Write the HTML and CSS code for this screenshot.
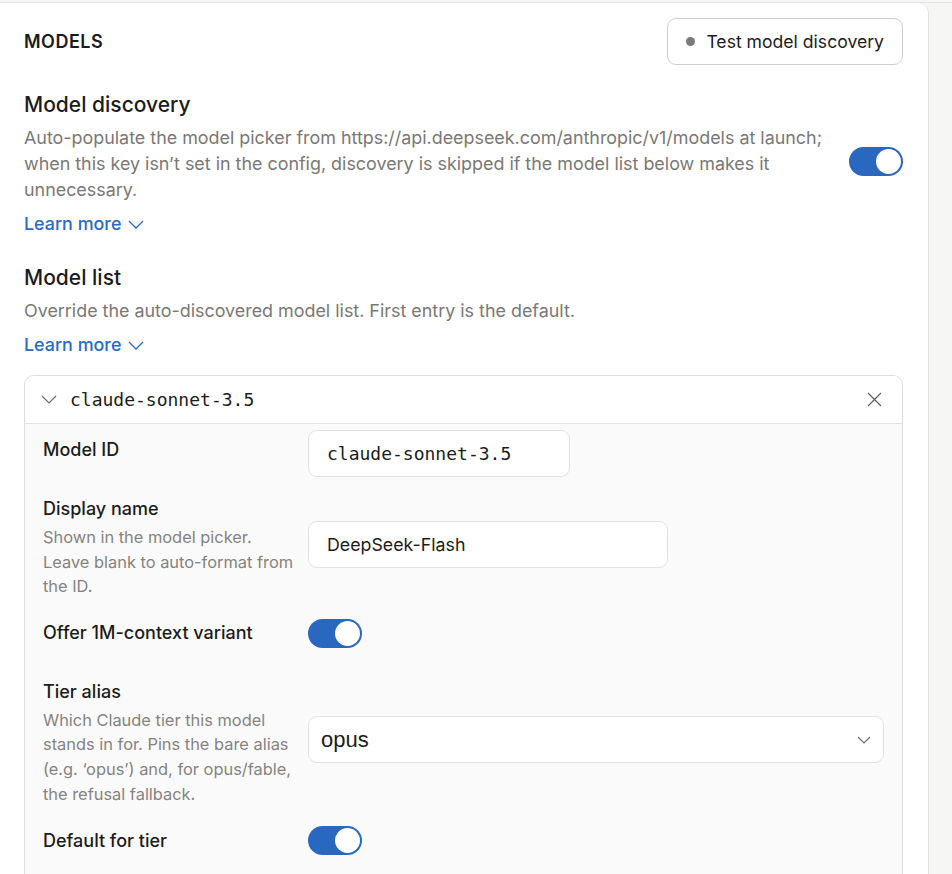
FILE: index.html
```html
<!DOCTYPE html>
<html lang="en">
<head>
    <meta charset="UTF-8">
    <title>Models</title>
    <meta name="viewport" content="width=device-width, initial-scale=1.0">
    <link rel="stylesheet" href="styles.css">
</head>
<body>
    <div class="shell">
        <section class="panel">
            <header class="panel-head">
                <h2 class="eyebrow">MODELS</h2>
                <button type="button" class="btn-outline"><span class="dot"></span>Test model discovery</button>
            </header>

            <div class="setting setting-inline">
                <div class="setting-text">
                    <h3>Model discovery</h3>
                    <p class="hint">Auto-populate the model picker from https://api.deepseek.com/anthropic/v1/models at launch; when this key isn’t set in the config, discovery is skipped if the model list below makes it unnecessary.</p>
                    <a href="#" class="learn">Learn more
                        <svg width="16" height="9" viewBox="0 0 16 9" fill="none" stroke="currentColor" stroke-width="1.3"><path d="M1 1l7 7 7-7"/></svg>
                    </a>
                </div>
                <label class="switch"><input type="checkbox" checked><span class="track"></span></label>
            </div>

            <div class="setting">
                <h3>Model list</h3>
                <p class="hint">Override the auto-discovered model list. First entry is the default.</p>
                <a href="#" class="learn">Learn more
                    <svg width="16" height="9" viewBox="0 0 16 9" fill="none" stroke="currentColor" stroke-width="1.3"><path d="M1 1l7 7 7-7"/></svg>
                </a>

                <div class="model-card">
                    <div class="model-card-head">
                        <svg class="chev" width="16" height="9" viewBox="0 0 16 9" fill="none" stroke="currentColor" stroke-width="1.2"><path d="M1 1l7 7 7-7"/></svg>
                        <span class="model-name">claude-sonnet-3.5</span>
                        <svg class="close" width="15" height="15" viewBox="0 0 15 15" fill="none" stroke="currentColor" stroke-width="1.2"><path d="M1 1l13 13M14 1L1 14"/></svg>
                    </div>
                    <div class="model-card-body">
                        <div class="field field-id">
                            <div class="field-label">Model ID</div>
                            <input type="text" class="text-input mono id-input" value="claude-sonnet-3.5">
                        </div>
                        <div class="field">
                            <div class="field-label">Display name
                                <p class="field-hint">Shown in the model picker. Leave blank to auto-format from the ID.</p>
                            </div>
                            <input type="text" class="text-input name-input" value="DeepSeek-Flash">
                        </div>
                        <div class="field">
                            <div class="field-label">Offer 1M-context variant</div>
                            <label class="switch"><input type="checkbox" checked><span class="track"></span></label>
                        </div>
                        <div class="field field-tier">
                            <div class="field-label">Tier alias
                                <p class="field-hint">Which Claude tier this model stands in for. Pins the bare alias (e.g. ‘opus’) and, for opus/fable, the refusal fallback.</p>
                            </div>
                            <div class="select-wrap">
                                <select class="select">
                                    <option>opus</option>
                                    <option>sonnet</option>
                                    <option>haiku</option>
                                </select>
                                <svg class="select-chev" width="14" height="8" viewBox="0 0 14 8" fill="none" stroke="currentColor" stroke-width="1.2"><path d="M1 1l6 6 6-6"/></svg>
                            </div>
                        </div>
                        <div class="field">
                            <div class="field-label">Default for tier</div>
                            <label class="switch"><input type="checkbox" checked><span class="track"></span></label>
                        </div>
                    </div>
                </div>
            </div>
        </section>
    </div>
</body>
</html>
```

FILE: styles.css
```css
body {
    margin: 0;
    padding-top: 2px;
    background: #f6f6f5;
    font-family: "Inter", "Noto Sans", sans-serif;
    color: #1c1c1c;
    min-height: 100vh;
    box-sizing: border-box;
}

.shell {
    border-top: 1px solid #e3e3e1;
    min-height: calc(100vh - 3px);
    display: flex;
}

.panel {
    width: 929px;
    background: white;
    border-right: 1px solid #e3e3e1;
    border-top-right-radius: 10px;
    padding: 15px 25px 0 24px;
    box-sizing: border-box;
}

.panel-head {
    display: flex;
    align-items: center;
    justify-content: space-between;
}

.eyebrow {
    margin: 0;
    font-size: 18px;
    font-weight: 600;
    letter-spacing: 0.5px;
}

.btn-outline {
    display: flex;
    align-items: center;
    gap: 11px;
    height: 47px;
    padding: 0 18px;
    background: white;
    border: 1px solid #cfcfcc;
    border-radius: 9px;
    font-family: inherit;
    font-size: 17.6px;
    color: #1c1c1c;
    cursor: pointer;
}

.dot {
    width: 9px;
    height: 9px;
    border-radius: 50%;
    background: #7a7a76;
}

.setting {
    margin-top: 26px;
}

.setting + .setting {
    margin-top: 27px;
}

.setting-inline {
    display: flex;
    align-items: center;
    gap: 14px;
}

.setting-inline .switch {
    margin-bottom: 6px;
}

.setting-text {
    flex: 1;
}

.setting h3 {
    margin: 0;
    font-size: 21px;
    line-height: 28px;
    font-weight: 500;
}

.hint {
    margin: 6px 0 8px;
    font-size: 17.9px;
    line-height: 26px;
    color: #7a7875;
}

.learn {
    display: inline-flex;
    align-items: center;
    gap: 7px;
    font-size: 17.9px;
    line-height: 26px;
    font-weight: 500;
    color: #2a6bc4;
    text-decoration: none;
}

.switch {
    position: relative;
    display: inline-block;
    width: 54px;
    height: 29px;
    flex-shrink: 0;
}

.switch input {
    display: none;
}

.track {
    position: absolute;
    inset: 0;
    border-radius: 15px;
    background: #2a68c0;
}

.track::after {
    content: "";
    position: absolute;
    top: 2px;
    right: 2px;
    width: 25px;
    height: 25px;
    border-radius: 50%;
    background: white;
}

.model-card {
    margin-top: 17px;
    border: 1px solid #dedede;
    border-radius: 10px;
    overflow: hidden;
}

.model-card-head {
    display: flex;
    align-items: center;
    height: 47px;
    padding: 0 20px 0 16px;
    border-bottom: 1px solid #e3e3e1;
    background: white;
}

.chev {
    color: #6e6e6e;
    margin-right: 13px;
}

.model-name {
    flex: 1;
    font-family: "DejaVu Sans Mono", "Liberation Mono", monospace;
    font-size: 18px;
}

.close {
    color: #5e5e5e;
}

.model-card-body {
    background: #fafafa;
    padding: 6px 18px 40px 18px;
    display: flex;
    flex-direction: column;
    gap: 20px;
}

.field {
    display: grid;
    grid-template-columns: 252px 1fr;
    column-gap: 13px;
    align-items: center;
}

.field-id .field-label {
    margin-bottom: 7px;
}

.field-label {
    font-size: 18px;
    line-height: 24px;
    font-weight: 500;
}

.field-hint {
    margin: 4px 0 0;
    font-size: 16.4px;
    line-height: 24.6px;
    font-weight: 400;
    color: #85837f;
}

.field-tier {
    margin-top: 12px;
}

.text-input {
    height: 47px;
    box-sizing: border-box;
    padding: 0 18px;
    border: 1px solid #e2e2e0;
    border-radius: 9px;
    background: white;
    font-family: inherit;
    font-size: 17.8px;
    color: #1c1c1c;
    outline: none;
}

.name-input {
    width: 360px;
    margin-bottom: 6px;
}

.mono {
    font-family: "DejaVu Sans Mono", "Liberation Mono", monospace;
    font-size: 18px;
}

.id-input {
    width: 262px;
}

.select-wrap {
    position: relative;
    margin-bottom: 6px;
}

.select {
    width: 100%;
    height: 47px;
    padding: 0 12px;
    border: 1px solid #e2e2e0;
    border-radius: 9px;
    background: white;
    font-family: "Liberation Sans", Arial, sans-serif;
    font-size: 22px;
    color: #1c1c1c;
    appearance: none;
    outline: none;
}

.select-chev {
    position: absolute;
    right: 13px;
    top: 20px;
    color: #6e6e6e;
    pointer-events: none;
}
```
